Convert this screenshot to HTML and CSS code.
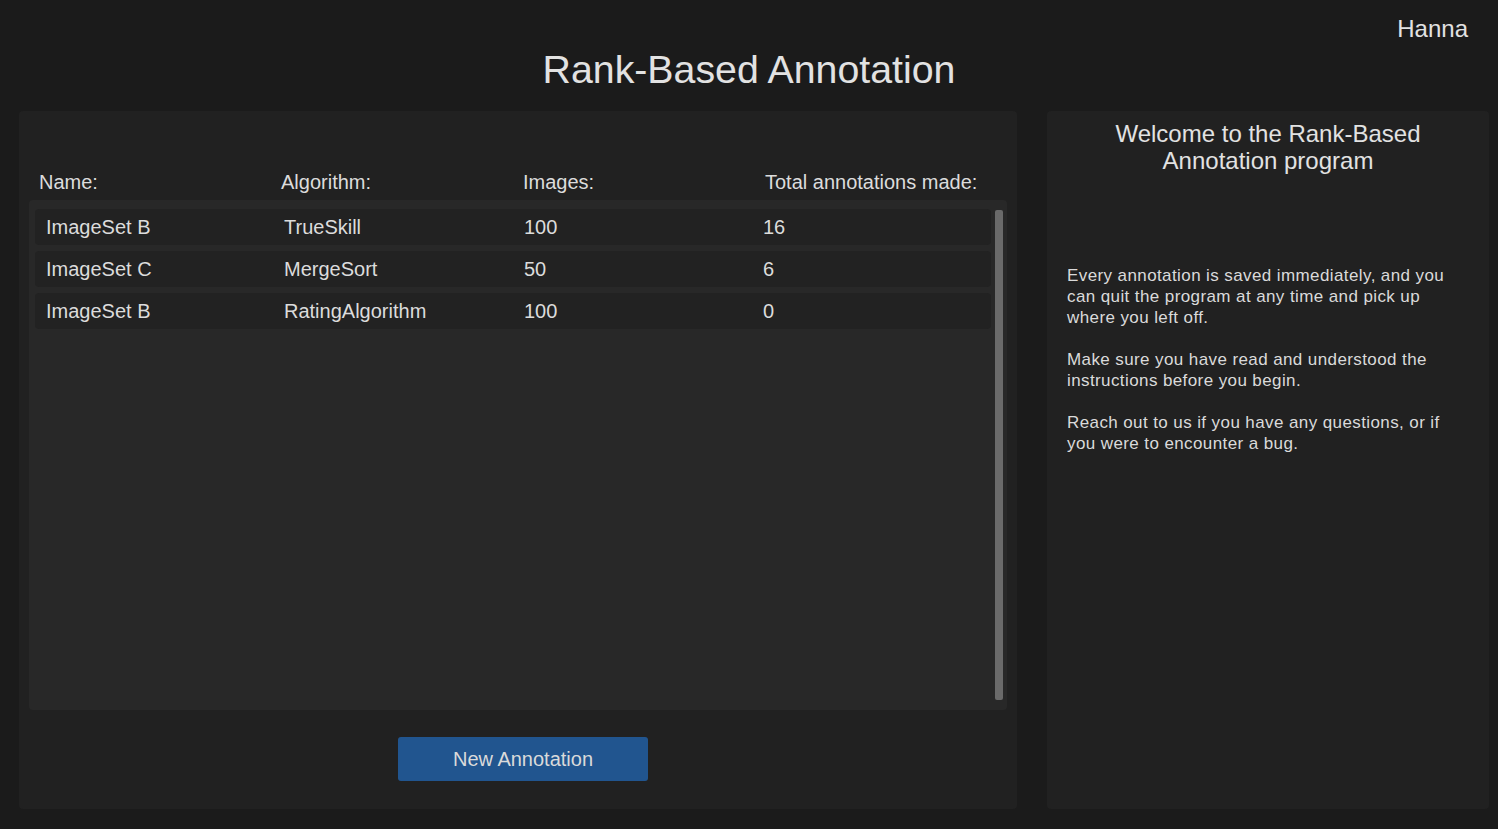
FILE: index.html
```html
<!DOCTYPE html>
<html>
<head>
<meta charset="utf-8">
<link rel="stylesheet" href="styles.css">
</head>
<body>
<header class="top">
  <div class="top-spacer"></div>
  <h1 class="title">Rank-Based Annotation</h1>
  <div class="user">Hanna</div>
</header>
<main class="main">
  <section class="panel panel-left">
    <div class="head-row">
      <div>Name:</div>
      <div>Algorithm:</div>
      <div>Images:</div>
      <div>Total annotations made:</div>
    </div>
    <div class="list">
      <div class="rows">
        <div class="row"><div>ImageSet B</div><div>TrueSkill</div><div>100</div><div>16</div></div>
        <div class="row"><div>ImageSet C</div><div>MergeSort</div><div>50</div><div>6</div></div>
        <div class="row"><div>ImageSet B</div><div>RatingAlgorithm</div><div>100</div><div>0</div></div>
      </div>
      <div class="scrollbar"></div>
    </div>
    <div class="actions">
      <button class="btn">New Annotation</button>
    </div>
  </section>
  <aside class="panel panel-right">
    <h2 class="welcome">Welcome to the Rank-Based Annotation program</h2>
    <p>Every annotation is saved immediately, and you can quit the program at any time and pick up where you left off.</p>
    <p>Make sure you have read and understood the instructions before you begin.</p>
    <p>Reach out to us if you have any questions, or if you were to encounter a bug.</p>
  </aside>
</main>
</body>
</html>
```
FILE: styles.css
```css
* { box-sizing: border-box; }
html, body { height: 100%; }
body {
  margin: 0;
  background: #1b1b1b;
  font-family: "Liberation Sans", Arial, sans-serif;
  color: #dadada;
}
.top {
  height: 111px;
  display: grid;
  grid-template-columns: 1fr auto 1fr;
}
.title {
  margin: 0;
  padding-top: 45px;
  font-size: 39.3px;
  font-weight: normal;
  line-height: 48px;
  color: #e2e2e2;
}
.user {
  justify-self: end;
  padding: 14px 30px 0 0;
  font-size: 24px;
  line-height: 30px;
  color: #e2e2e2;
}
.main {
  display: flex;
  gap: 30px;
  padding: 0 9px 20px 19px;
  height: 718px;
}
.panel {
  background: #212121;
  border-radius: 4px;
}
.panel-left {
  width: 998px;
  display: flex;
  flex-direction: column;
  padding: 56px 10px 0 10px;
}
.head-row {
  display: grid;
  grid-template-columns: 242px 242px 242px 1fr;
  padding-left: 10px;
  font-size: 20px;
  line-height: 30px;
  margin-bottom: 3px;
  color: #dcdcdc;
}
.list {
  height: 510px;
  background: #282828;
  border-radius: 4px;
  display: flex;
  gap: 4px;
  padding: 9px 4px 10px 6px;
}
.rows {
  flex: 1;
  display: flex;
  flex-direction: column;
  gap: 6px;
}
.row {
  height: 36px;
  background: #222222;
  border-radius: 4px;
  display: grid;
  grid-template-columns: 238px 240px 239px 1fr;
  padding-left: 11px;
  font-size: 20px;
  line-height: 36px;
  color: #dcdcdc;
}
.scrollbar {
  width: 8px;
  margin-top: 1px;
  background: #6a6a6a;
  border-radius: 2px;
}
.actions {
  padding-top: 27px;
}
.btn {
  margin-left: 369px;
  width: 250px;
  height: 44px;
  border: none;
  border-radius: 3px;
  background: #21558f;
  color: #dadada;
  font-family: "Liberation Sans", Arial, sans-serif;
  font-size: 20px;
  padding: 0;
}
.panel-right {
  flex: 1;
  padding: 9px 20px 0 20px;
}
.welcome {
  margin: 0 0 91px 0;
  text-align: center;
  font-size: 24px;
  font-weight: normal;
  line-height: 27px;
  color: #e2e2e2;
}
.panel-right p {
  margin: 0 0 21px 0;
  font-size: 17px;
  letter-spacing: 0.4px;
  line-height: 21px;
  color: #dadada;
}
```
